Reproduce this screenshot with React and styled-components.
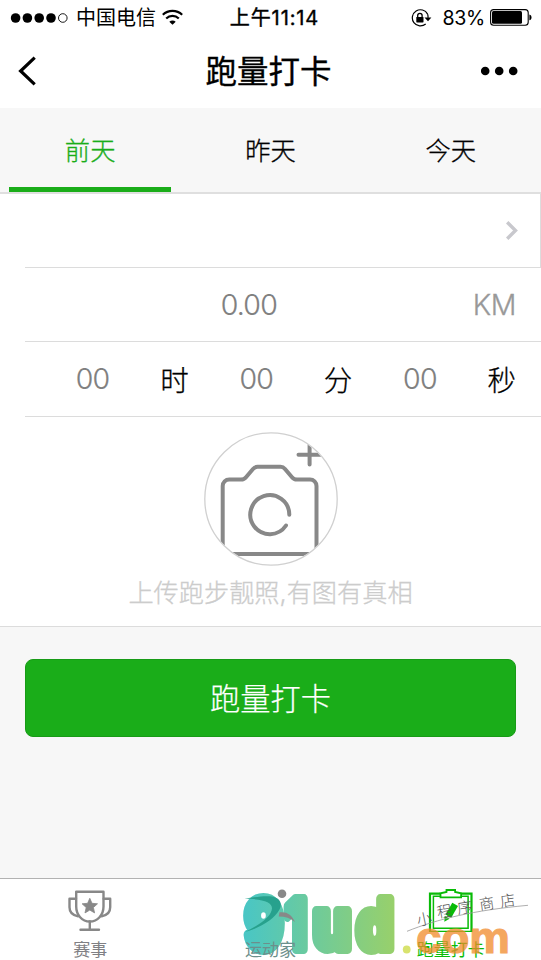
import React from 'react';
import styled, { createGlobalStyle } from 'styled-components';

const GlobalStyle = createGlobalStyle`
    * { box-sizing: border-box; }
    body {
        margin: 0;
        background: #f7f7f7;
        color: #000;
        font-family: Inter, 'Noto Sans CJK SC', sans-serif;
    }
    svg { display: block; }
`;

const Screen = styled.div`
    display: flex;
    flex-direction: column;
    width: 541px;
    height: 960px;
    overflow: hidden;
    background: #f7f7f7;
`;

const StatusBar = styled.div`
    display: grid;
    grid-template-columns: 1fr auto 1fr;
    align-items: center;
    height: 34px;
    padding: 1px 9px 0 10px;
    background: #fff;
    font-size: 20px;
    line-height: 32px;
`;

const StatusGroup = styled.div`
    display: flex;
    align-items: center;
    justify-content: ${p => p.$end ? 'flex-end' : 'flex-start'};
    gap: ${p => p.$gap || 0}px;
`;

const Clock = styled.div`
    margin-left: 7px;
    font-size: 20px;
    letter-spacing: 0.9px;
    -webkit-text-stroke: 0.4px #000;
`;

const Percent = styled.span`
    margin: 0 5px 0 10px;
    font-size: 19.6px;
    letter-spacing: -0.3px;
`;

const NavBar = styled.header`
    display: grid;
    grid-template-columns: 60px 1fr 60px;
    align-items: center;
    height: 74px;
    background: #fff;
`;

const Title = styled.h1`
    margin: 0 0 0 -4px;
    padding-top: 2px;
    text-align: center;
    font-size: 31.5px;
    font-weight: 400;
    line-height: 72px;
    -webkit-text-stroke: 0.35px #000;
`;

const Tabs = styled.nav`
    display: grid;
    grid-template-columns: repeat(3, 1fr);
    height: 86px;
    border-bottom: 2px solid #dfdfdf;
`;

const Tab = styled.button`
    margin: 0 9px;
    padding: 2px 0 0;
    border: 0;
    border-bottom: 5px solid ${p => p.$active ? '#1aad19' : 'transparent'};
    background: none;
    color: ${p => p.$active ? '#1aad19' : '#000'};
    font: inherit;
    font-size: 25.3px;
    font-weight: 300;
    -webkit-text-stroke: 0.3px currentColor;
`;

const Form = styled.section`
    padding-left: 25px;
    background: #fff;
    border-bottom: 1px solid #dcdcdc;
`;

const Row = styled.div`
    display: flex;
    align-items: center;
    justify-content: flex-end;
    height: ${p => p.$h}px;
    padding-right: ${p => p.$edge ? 22 : 25}px;
    padding-bottom: ${p => p.$lift || 0}px;
    border-bottom: 1px solid #dcdcdc;
    border-right: ${p => p.$edge ? '1px solid #dcdcdc' : '0'};
    font-size: 28.5px;
    font-weight: 300;
`;

const Value = styled.span`
    flex: 1;
    text-align: center;
    color: #808080;
    letter-spacing: -0.8px;
    -webkit-text-stroke: 0.2px #808080;
`;

const Unit = styled.span`
    color: ${p => p.$muted ? '#999' : '#000'};
    letter-spacing: ${p => p.$muted ? '-0.4px' : '0'};
    -webkit-text-stroke: 0.3px currentColor;
`;

const Upload = styled.div`
    display: flex;
    flex-direction: column;
    align-items: center;
    height: 209px;
    padding: 15px 25px 0 0;
`;

const UploadHint = styled.p`
    margin: 8px 0 0;
    color: #ccc;
    font-size: 25.2px;
    font-weight: 300;
    line-height: 38px;
    white-space: nowrap;
    -webkit-text-stroke: 0.3px #ccc;
`;

const SubmitButton = styled.button`
    height: 78px;
    margin: 32px 25px 0;
    padding: 0 0 2px;
    border: 1px solid #189b17;
    border-radius: 8px;
    background: #1aad19;
    color: #fff;
    font: inherit;
    font-size: 30.2px;
    font-weight: 300;
    -webkit-text-stroke: 0.25px #fff;
`;

const TabBar = styled.footer`
    position: relative;
    display: grid;
    grid-template-columns: repeat(3, 1fr);
    height: 82px;
    margin-top: auto;
    border-top: 1px solid #b2b2b2;
    background: #fff;
`;

const TabItem = styled.div`
    position: relative;
    display: flex;
    flex-direction: column;
    align-items: center;
    padding-top: 9px;
    color: ${p => p.$color};
    font-size: 17px;
    line-height: 22px;
`;

const TabLabel = styled.span`
    margin-top: 7px;
`;

const Watermark = styled.svg`
    position: absolute;
    left: 0;
    top: 0;
    pointer-events: none;
`;

const SignalDots = () => (
    <svg width='60' height='12' viewBox='0 0 60 12'>
        {[5.6, 17.4, 29.2, 41].map(x => <circle key={x} cx={x} cy='6' r='4.8' />)}
        <circle cx='52.8' cy='6' r='4.3' fill='none' stroke='#000' strokeWidth='0.9' />
    </svg>
);

const WifiIcon = () => (
    <svg width='22' height='17' viewBox='0.5 0.5 22 17' fill='none' stroke='#000' strokeWidth='2.2'>
        <path d='M1.3 6.2C6.8 1.1 15.2 1.1 20.7 6.2' />
        <path d='M4.7 10c3.6-3.5 9-3.5 12.6 0' />
        <path d='M11 16.3 7.8 13.2c1.9-1.7 4.5-1.7 6.4 0Z' fill='#000' stroke='none' />
    </svg>
);

const RotationLock = () => (
    <svg width='21' height='18' viewBox='0 0 21 18' fill='none' stroke='#000' strokeWidth='1.2'>
        <path d='M16.6 5.1A8.1 8.1 0 1 0 14.7 15' />
        <path d='M17 8.8a8 8 0 0 0-.4-3.7' />
        <path d='M13.5 8.5h6.9l-3.4 3.7Z' fill='#000' stroke='none' />
        <rect x='5.3' y='8' width='7.2' height='5.4' rx='.6' fill='#000' stroke='none' />
        <path d='M6.7 8.3V6.6a2.2 2.2 0 0 1 4.4 0v1.7' strokeWidth='1.3' />
    </svg>
);

const Battery = () => (
    <svg width='42' height='17' viewBox='0 0 42 17'>
        <rect x='.6' y='.6' width='37.6' height='15.6' rx='3' fill='none' stroke='#000' strokeWidth='1.1' />
        <rect x='2' y='2' width='30' height='12.8' rx='1.5' />
        <path d='M39.4 5.6c2.8.7 2.8 5 0 5.7Z' />
    </svg>
);

const BackIcon = () => (
    <svg width='40' height='30' viewBox='0 0 40 30' fill='none' stroke='#000' strokeWidth='3.2'>
        <path d='M34.7 1.6 20.6 15l14.1 13.3' />
    </svg>
);

const MoreIcon = () => (
    <svg width='60' height='10' viewBox='0 0 60 10'>
        <circle cx='4.2' cy='5' r='4.3' />
        <circle cx='18.2' cy='5' r='4.3' />
        <circle cx='32.2' cy='5' r='4.3' />
    </svg>
);

const ArrowIcon = () => (
    <svg width='12' height='19' viewBox='0 0 12 19' fill='none' stroke='#c8c8cd' strokeWidth='3.4'>
        <path d='m1.2 1.2 8.3 8.3-8.3 8.3' />
    </svg>
);

const CameraIcon = () => (
    <svg width='134' height='134' viewBox='0 0 134 134' fill='none' stroke='#888' strokeWidth='4'>
        <clipPath id='lens'><circle cx='67' cy='67' r='65.7' /></clipPath>
        <g clipPath='url(#lens)' strokeLinecap='round'>
            <path d='M18.7 122V54a6.5 6.5 0 0 1 6.5-6.5H37q3.2 0 5-2.3l7-8.2q1.8-2.2 4.5-2.2h23q2.7 0 4.5 2.2l7 8.2q1.8 2.3 5 2.3h13a6.5 6.5 0 0 1 6.5 6.5v68Z' />
            <path d='M85.3 82.8A19.5 19.5 0 1 0 82 93.5' />
            <path d='M94.5 22.7h24M105.6 8v24.5' />
        </g>
        <circle cx='67' cy='67' r='66.2' stroke='#d0d0d0' strokeWidth='1.3' />
    </svg>
);

const TrophyIcon = () => (
    <svg width='46' height='44' viewBox='67 888 46 44' fill='none' stroke='#888' strokeWidth='2.4' strokeLinejoin='round'>
        <path d='M76.2 891.8h27.3v14.7c0 8.5-6 15-13.7 15s-13.6-6.5-13.6-15Z' />
        <path d='M76 898.8h-6.5v8.5q0 7.5 8.5 9M103.7 898.8h6.5v8.5q0 7.5-8.5 9M89.8 921.5v8M80.5 929.7h18.5' strokeLinecap='round' />
        <path d='m89.8 898.3 2.2 5 5.5.5-4.1 3.7 1.2 5.4-4.8-2.8-4.8 2.8 1.2-5.4-4.1-3.7 5.5-.5Z' fill='#888' strokeWidth='0.8' />
    </svg>
);

const RunnerIcon = () => (
    <svg width='54' height='44' viewBox='244 888 54 44'>
        <path d='M245.5 898.8c10-1.6 20.5-3.4 27.5-2.2 8.5 1.4 10.5 7.4 7.5 13-5.6 10-18.5 18-34.5 22.400 12-6 22-12.400 25.700-19.300 4.800-9-3.700-13.900-26.200-13.900Z' fill='#27a18d' />
        <circle cx='283' cy='893.7' r='4.3' fill='#888' />
        <path d='M280.5 912.3c8-.8 12 2.5 15.5 9.7-4.8-3.7-9.6-5.5-16.3-5.5Z' fill='#888' />
    </svg>
);

const ClipboardIcon = () => (
    <svg width='46' height='44' viewBox='427 888 46 44' fill='none' stroke='#09bb07' strokeWidth='2.2'>
        <path d='M439 893.7h-10v38.1h41.5v-38.1h-10' />
        <path d='M439 896.2h-6.6v32h34.7v-32h-6.6' strokeWidth='1.5' />
        <path d='M439.5 897.3v-4l6-1.3v-2h8.6v2l6 1.3v4Z' strokeWidth='1.8' />
        <path d='m444.5 914.5 6.8-11.7 5.7 3.3-6.8 11.7Z' fill='#09bb07' stroke='none' />
        <path d='m443.8 916 4.8 2.8-5.3 3Z' fill='#09bb07' stroke='none' />
    </svg>
);

const Logo = () => (
    <Watermark width='541' height='81' viewBox='0 879 541 81'>
        <defs>
            <linearGradient id='brand' gradientUnits='userSpaceOnUse' x1='244' y1='0' x2='394' y2='0'>
                <stop offset='0' stopColor='#49c6c5' />
                <stop offset='1' stopColor='#98d06b' />
            </linearGradient>
        </defs>
        <g
            fontSize='69' fontWeight='800' fontFamily='Inter' fill='url(#brand)'
            stroke='url(#brand)' strokeWidth='10' strokeLinejoin='round'
        >
            <text x='245' y='949' textLength='38' lengthAdjust='spacingAndGlyphs'>9</text>
            <text x='285' y='949' textLength='22' lengthAdjust='spacingAndGlyphs'>1</text>
            <text x='313' y='949' textLength='38' lengthAdjust='spacingAndGlyphs'>u</text>
            <text x='356.5' y='949' textLength='37' lengthAdjust='spacingAndGlyphs'>d</text>
        </g>
    </Watermark>
);

const Signature = () => (
    <Watermark width='541' height='81' viewBox='0 879 541 81'>
        <circle cx='406.7' cy='949.5' r='3.9' fill='#d8e36e' />
        <text
            x='416' y='952.5' fontSize='44' fontWeight='700' fontFamily='Liberation Sans'
            textLength='94' lengthAdjust='spacingAndGlyphs' fill='#f18a2a' stroke='#f18a2a' strokeWidth='1.2' opacity='0.75'
        >com</text>
        <path d='M407 931.3c30-12 66-21 121-26' fill='none' stroke='#999' strokeWidth='.8' />
        <g fill='#555' fontSize='15' fontWeight='300' fontFamily='Noto Sans CJK SC'>
            <text transform='translate(418 926) rotate(-12)'>小</text>
            <text transform='translate(438 918) rotate(-10)'>程</text>
            <text transform='translate(458 914) rotate(-8)'>序</text>
            <text transform='translate(480 910) rotate(-8)'>商</text>
            <text transform='translate(501 907) rotate(-8)'>店</text>
        </g>
    </Watermark>
);

const units = ['时', '分', '秒'];

const App = () => {
    return (
        <Screen>
            <GlobalStyle />
            <StatusBar>
                <StatusGroup $gap={6}>
                    <SignalDots />
                    <span>中国电信</span>
                    <WifiIcon />
                </StatusGroup>
                <Clock>上午11:14</Clock>
                <StatusGroup $end>
                    <RotationLock />
                    <Percent>83%</Percent>
                    <Battery />
                </StatusGroup>
            </StatusBar>
            <NavBar>
                <BackIcon />
                <Title>跑量打卡</Title>
                <MoreIcon />
            </NavBar>
            <Tabs>
                <Tab $active>前天</Tab>
                <Tab>昨天</Tab>
                <Tab>今天</Tab>
            </Tabs>
            <Form>
                <Row $h={74} $edge>
                    <ArrowIcon />
                </Row>
                <Row $h={74}>
                    <Value>0.00</Value>
                    <Unit $muted>KM</Unit>
                </Row>
                <Row $h={75} $lift={2}>
                    {units.map(unit => (
                        <React.Fragment key={unit}>
                            <Value>00</Value>
                            <Unit>{unit}</Unit>
                        </React.Fragment>
                    ))}
                </Row>
                <Upload>
                    <CameraIcon />
                    <UploadHint>上传跑步靓照,有图有真相</UploadHint>
                </Upload>
            </Form>
            <SubmitButton>跑量打卡</SubmitButton>
            <TabBar>
                <Logo />
                <TabItem $color='#808084'>
                    <TrophyIcon />
                    <TabLabel>赛事</TabLabel>
                </TabItem>
                <TabItem $color='#6c8f8c'>
                    <RunnerIcon />
                    <TabLabel>运动家</TabLabel>
                </TabItem>
                <TabItem $color='#09bb07'>
                    <ClipboardIcon />
                    <TabLabel>跑量打卡</TabLabel>
                </TabItem>
                <Signature />
            </TabBar>
        </Screen>
    );
};

export default App;
